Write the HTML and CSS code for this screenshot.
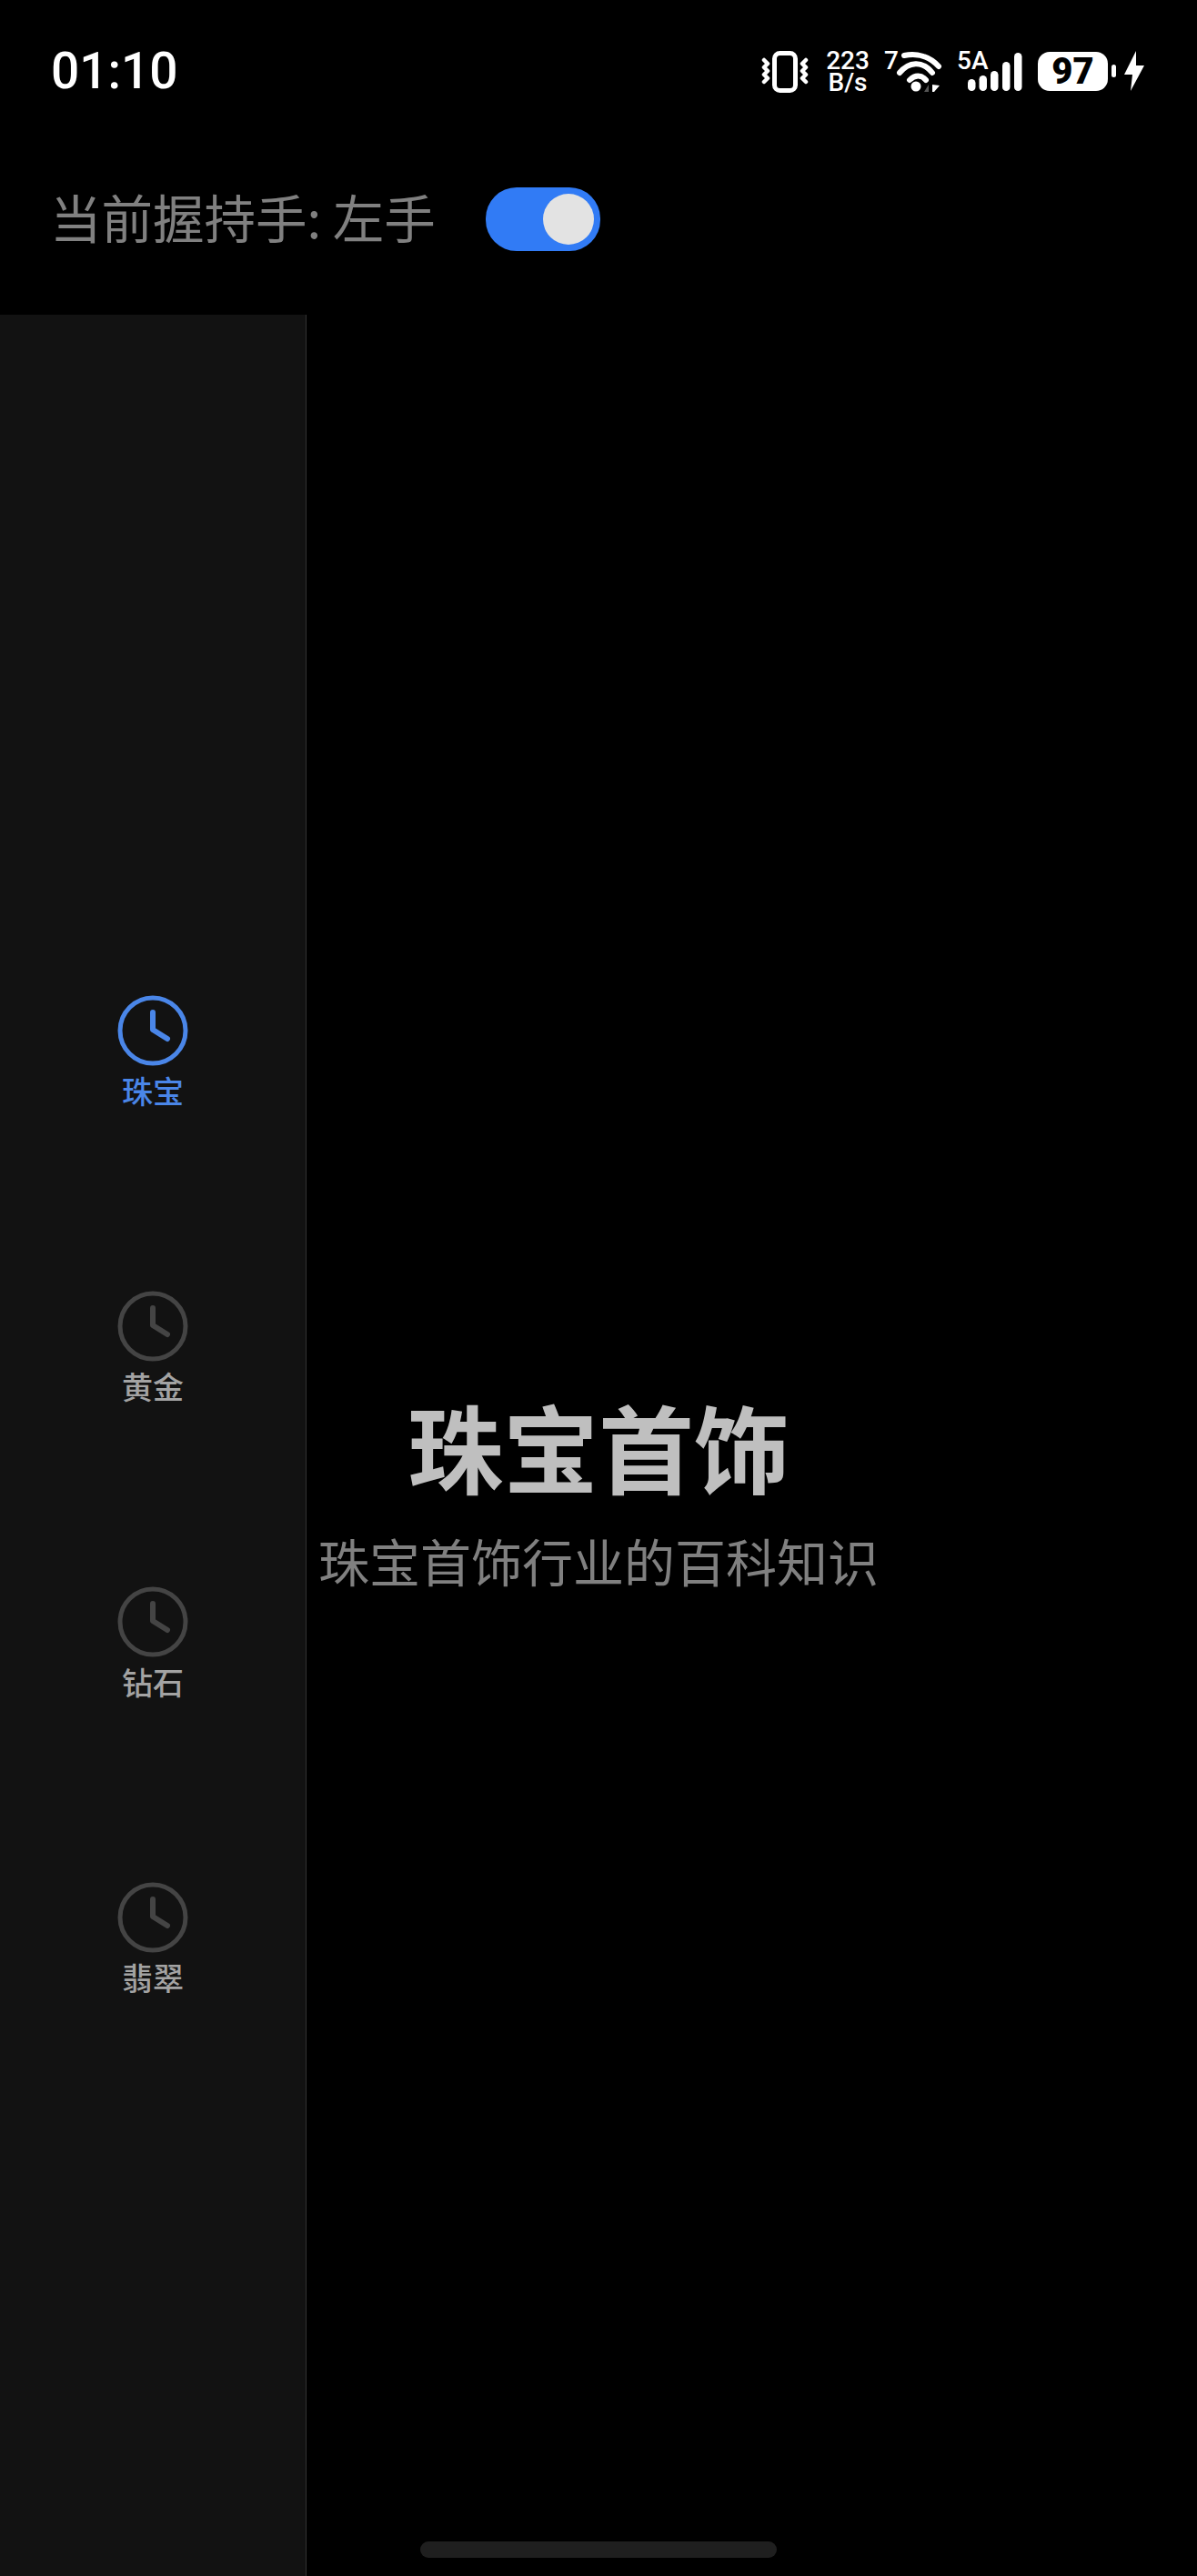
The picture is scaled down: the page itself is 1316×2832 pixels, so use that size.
FILE: index.html
```html
<!DOCTYPE html>
<html lang="zh-CN">
<head>
<meta charset="utf-8">
<title>珠宝首饰</title>
<link rel="stylesheet" href="styles.css">
</head>
<body>
<div class="page">
  <header class="status">
    <span class="time">01:10</span>
    <div class="status-icons">
      <svg class="ic-vibrate" width="52" height="46" viewBox="0 0 52 46" fill="none" stroke="#fff" stroke-linecap="round" stroke-linejoin="round">
        <rect x="14.5" y="2.5" width="23" height="41" rx="6" stroke-width="5"/>
        <path d="M3 10l4 4-4 4 4 4-4 4 4 4-4 4M49 10l-4 4 4 4-4 4 4 4-4 4 4 4" stroke-width="4.500"/>
      </svg>
      <div class="speed">223 B/s</div>
      <div class="wifi">
        <span class="net-label seven">7</span>
        <svg width="52" height="46" viewBox="0 0 52 46" fill="none" stroke="#fff" stroke-width="6" stroke-linecap="round">
          <path d="M9 5c14-3 28 1 38 12"/>
          <path d="M4 24c10-12 25-14 36 0"/>
          <path d="M15 32c6-6 13-6 18 0"/>
          <circle cx="22" cy="39" r="5.500" fill="#fff" stroke="none"/>
          <path d="M36 37l-5 8h5z" fill="#555" stroke="none"/>
          <path d="M40 37v8h2l6-7z" fill="#fff" stroke="none"/>
        </svg>
      </div>
      <div class="signal">
        <span class="net-label five">5A</span>
        <svg width="61" height="45" viewBox="0 0 61 45" fill="#fff">
          <rect x="1" y="31" width="8.500" height="13" rx="4.250"/>
          <rect x="13.500" y="27" width="8.500" height="17" rx="4.250"/>
          <rect x="26" y="22" width="8.500" height="22" rx="4.250"/>
          <rect x="39" y="12" width="8.500" height="32" rx="4.250"/>
          <rect x="52" y="2" width="8.500" height="42" rx="4.250"/>
        </svg>
      </div>
      <div class="battery">
        <span class="battery-body">97</span>
        <span class="battery-nub"></span>
        <svg width="23" height="44" viewBox="0 0 23 44" fill="#fff"><path d="M13 0L0 26h9L7 44l15-28h-9z"/></svg>
      </div>
    </div>
  </header>

  <div class="grip">
    <span class="grip-label">当前握持手: 左手</span>
    <span class="switch"><span class="switch-thumb"></span></span>
  </div>

  <div class="body">
    <nav class="side">
      <a class="tab is-active">
        <svg class="clock" width="78" height="78" viewBox="0 0 78 78" fill="none" stroke="currentColor" stroke-width="5" stroke-linecap="round" stroke-linejoin="round"><circle cx="39" cy="39" r="36"/><path d="M39 19v19l16 10" stroke-width="6"/></svg>
        <span>珠宝</span>
      </a>
      <a class="tab">
        <svg class="clock" width="78" height="78" viewBox="0 0 78 78" fill="none" stroke="currentColor" stroke-width="5" stroke-linecap="round" stroke-linejoin="round"><circle cx="39" cy="39" r="36"/><path d="M39 19v19l16 10" stroke-width="6"/></svg>
        <span>黄金</span>
      </a>
      <a class="tab">
        <svg class="clock" width="78" height="78" viewBox="0 0 78 78" fill="none" stroke="currentColor" stroke-width="5" stroke-linecap="round" stroke-linejoin="round"><circle cx="39" cy="39" r="36"/><path d="M39 19v19l16 10" stroke-width="6"/></svg>
        <span>钻石</span>
      </a>
      <a class="tab">
        <svg class="clock" width="78" height="78" viewBox="0 0 78 78" fill="none" stroke="currentColor" stroke-width="5" stroke-linecap="round" stroke-linejoin="round"><circle cx="39" cy="39" r="36"/><path d="M39 19v19l16 10" stroke-width="6"/></svg>
        <span>翡翠</span>
      </a>
    </nav>
    <main class="intro">
      <h1>珠宝首饰</h1>
      <p>珠宝首饰行业的百科知识</p>
    </main>
  </div>
  <div class="home-bar"></div>
</div>
</body>
</html>
```

FILE: styles.css
```css
* { box-sizing: border-box; }
html, body { margin: 0; padding: 0; background: #000; }
body { font-family: "Noto Sans CJK SC", "Noto Sans", sans-serif; }
.page { position: relative; width: 1316px; height: 2832px; display: flex; flex-direction: column; overflow: hidden; background: #000; }

.status { height: 124px; padding: 50px 57px 0 56px; display: flex; justify-content: space-between; align-items: flex-start; color: #fff; }
.time { font-family: Roboto, sans-serif; font-weight: 500; font-size: 55px; line-height: 56px; height: 56px; }
.status-icons { display: flex; align-items: flex-start; padding-top: 6px; height: 46px; }
.ic-vibrate { display: block; margin-right: 18px; }
.speed { width: 50px; margin-right: 15px; margin-top: -1px; text-align: center; font-family: Roboto, sans-serif; font-weight: 500; font-size: 28px; line-height: 24px; }
.wifi { position: relative; width: 65px; padding-left: 13px; margin-right: 15px; }
.wifi svg, .signal svg, .battery svg { display: block; }
.net-label { font-family: Roboto, sans-serif; font-weight: 500; font-size: 28px; line-height: 24px; position: absolute; top: -1px; left: 0; }
.signal { position: relative; width: 72px; padding-left: 11px; margin-right: 17px; }
.battery { display: flex; align-items: center; height: 44px; }
.battery-body { width: 77px; height: 43px; border-radius: 13px; background: #fff; color: #000; font-family: Roboto, sans-serif; font-weight: 900; font-size: 40px; line-height: 43px; text-align: center; }
.battery-nub { width: 5px; height: 14px; margin: 0 9px 0 4px; border-radius: 3px; background: #fff; }

.grip { height: 222px; padding: 82px 0 0 55px; display: flex; align-items: flex-start; }
.grip-label { font-size: 56.500px; line-height: 62px; color: #808080; width: 479px; white-space: nowrap; }
.switch { display: flex; justify-content: flex-end; align-items: center; width: 126px; height: 70px; padding-right: 7px; border-radius: 34px; background: #317bf5; }
.switch-thumb { width: 56px; height: 56px; border-radius: 50%; background: #e3e3e3; }

.body { flex: 1; display: flex; min-height: 0; }
.side { width: 337px; flex: none; padding-top: 748px; display: flex; flex-direction: column; align-items: center; gap: 201px; background: #121212; border-right: 1px solid #333; }
.tab { display: flex; flex-direction: column; align-items: center; gap: 8px; height: 124px; color: #444; }
.tab span { font-size: 34px; line-height: 38px; font-weight: 500; color: #a3a3a3; }
.tab.is-active, .tab.is-active span { color: #4a86e8; }
.clock { display: block; }

.intro { flex: 1; min-width: 0; padding: 1180px 337px 0 0; display: flex; flex-direction: column; align-items: center; }
.intro h1 { margin: 0; font-size: 105px; font-weight: 700; line-height: 124px; color: #bfbfbf; }
.intro p { margin: 25px 0 0; font-size: 56px; font-weight: 400; line-height: 80px; color: #808080; white-space: nowrap; }

.home-bar { position: absolute; left: 462px; top: 2794px; width: 392px; height: 18px; border-radius: 9px; background: #1f1f1f; }
```
